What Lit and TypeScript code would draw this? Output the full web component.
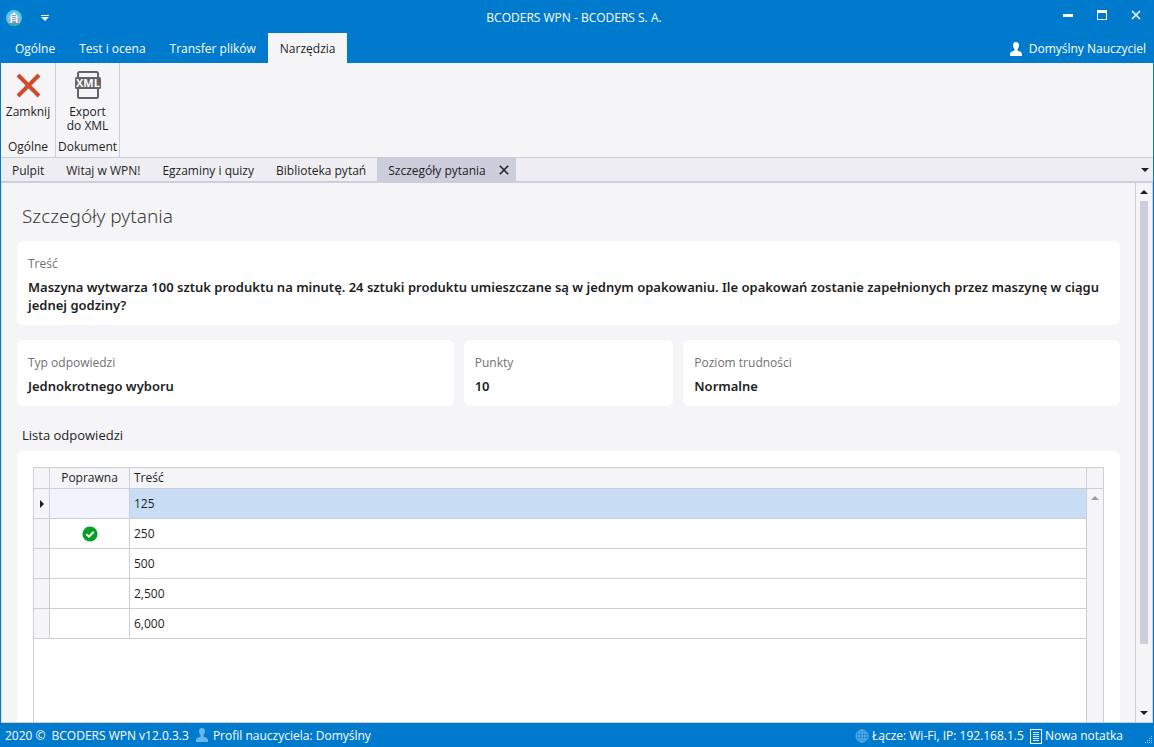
import { LitElement, html, svg, css, nothing } from "lit";
import { customElement, state } from "lit/decorators.js";
import { classMap } from "lit/directives/class-map.js";

interface Answer {
  text: string;
  correct: boolean;
}

const RIBBON_TABS = ["Ogólne", "Test i ocena", "Transfer plików", "Narzędzia"];
const DOCUMENTS = ["Pulpit", "Witaj w WPN!", "Egzaminy i quizy", "Biblioteka pytań", "Szczegóły pytania"];
const ANSWERS: Answer[] = [
  { text: "125", correct: false },
  { text: "250", correct: true },
  { text: "500", correct: false },
  { text: "2,500", correct: false },
  { text: "6,000", correct: false },
];

const person = svg`<path d="M7 0C9.2 0 10.2 1.6 10 3.8C9.9 5.2 9.3 6.3 8.6 7V8.8C10.6 9.4 13 10 13 12V14H1V12C1 10 3.4 9.4 5.4 8.8V7C4.7 6.3 4.1 5.2 4 3.8C3.8 1.6 4.8 0 7 0Z" fill="currentColor"/>`;

const logoIcon = html`<svg width="16" height="16" viewBox="0 0 16 16" aria-hidden="true">
  <circle cx="8" cy="8" r="8" fill="#4dcbea"/>
  <path d="M1.6 12.8H14.4A8 8 0 0 1 1.6 12.8Z" fill="#35ae9c"/>
  <path d="M2.5 6.500H13.5V13H2.5Z" fill="#d8b9c8"/>
  <path d="M4.6 4.8L8 2L11.4 4.8V13H4.6Z" fill="#f3eef6"/>
  <path d="M4.4 5L8 2L11.6 5" fill="none" stroke="#e3a9ba" stroke-width=".8"/>
  <path d="M6 5.500H10M6 7.500H10M6 9.500H10" stroke="#6aa9dd" stroke-width="1"/>
  <path d="M3.5 8V12M12.5 8V12" stroke="#8e9bc8" stroke-width=".8"/>
  <path d="M6 11H10V13H6Z" fill="#7f9fd6"/>
</svg>`;

const closeBigIcon = html`<svg width="32" height="32" viewBox="0 0 32 32" aria-hidden="true">
  <path d="M6 5L27 26M27 5L6 26" stroke="#d24a2e" stroke-width="4"/>
</svg>`;

const xmlIcon = html`<svg width="32" height="32" viewBox="0 0 32 32" aria-hidden="true">
  <path d="M6 8V3.500Q6 2 7.500 2H24.500Q26 2 26 3.500V8" fill="none" stroke="#646464" stroke-width="2"/>
  <path d="M6 19V26.500Q6 28 7.500 28H24.500Q26 28 26 26.500V19" fill="none" stroke="#646464" stroke-width="2"/>
  <rect x="3" y="7" width="26" height="12" rx="1.500" fill="#646464"/>
  <text x="16" y="17" text-anchor="middle" font-family="Open Sans, sans-serif" font-size="11" font-weight="700" fill="#fff">XML</text>
</svg>`;

const checkIcon = html`<svg width="16" height="16" viewBox="0 0 16 16" role="img" aria-label="Poprawna">
  <circle cx="8" cy="8" r="7.600" fill="#049f25"/>
  <path d="M4.300 8.200L7 10.700L11.700 5.700" fill="none" stroke="#fff" stroke-width="2"/>
</svg>`;

const globeIcon = html`<svg width="14" height="14" viewBox="0 0 14 14" aria-hidden="true">
  <g fill="none" stroke="#67b5ea" stroke-width="1">
    <circle cx="7" cy="7" r="6"/>
    <ellipse cx="7" cy="7" rx="3" ry="6"/>
    <path d="M7 1V13M1 7H13M2 4H12M2 10H12"/>
  </g>
</svg>`;

const noteIcon = html`<svg width="12" height="15" viewBox="0 0 12 15" aria-hidden="true">
  <rect x=".5" y=".5" width="11" height="14" fill="none" stroke="#fff"/>
  <path d="M3 3.500H9M3 5.500H9M3 7.500H9M3 9.500H9M3 11.500H9" stroke="#cfe6f7" stroke-width="1"/>
</svg>`;

const gripIcon = html`<svg width="8" height="8" viewBox="0 0 8 8" aria-hidden="true">
  <path d="M6 0H7V1H6ZM4 2H5V3H4ZM6 2H7V3H6ZM2 4H3V5H2ZM4 4H5V5H4ZM6 4H7V5H6ZM0 6H1V7H0ZM2 6H3V7H2ZM4 6H5V7H4ZM6 6H7V7H6Z" fill="#9fd0f2"/>
</svg>`;

const downIcon = html`<svg width="8" height="4" viewBox="0 0 8 4" aria-hidden="true"><path d="M0 0H8L4 4Z" fill="currentColor"/></svg>`;
const upIcon = html`<svg width="8" height="4" viewBox="0 0 8 4" aria-hidden="true"><path d="M0 4H8L4 0Z" fill="currentColor"/></svg>`;

@customElement("app-root")
export class AppRoot extends LitElement {
  @state() private ribbonTab = 3;
  @state() private document = 4;
  @state() private row = 0;

  static styles = css`
    :host {
      --blue: #007acc;
      --line: #cccedb;
      --panel: #f5f5f7;
      display: flex;
      flex-direction: column;
      height: 100vh;
      overflow: hidden;
      background: var(--blue);
      color: #1e1e1e;
      font: 12px/16px "Open Sans", "Noto Sans", sans-serif;
    }
    * { box-sizing: border-box; }
    button {
      margin: 0;
      padding: 0;
      border: 0;
      background: none;
      color: inherit;
      font: inherit;
      display: flex;
      align-items: center;
      white-space: nowrap;
    }
    svg { display: block; flex: none; }
    h1, h2, p, dl, dd { margin: 0; font-weight: 400; }

    .titlebar {
      display: grid;
      grid-template-columns: 1fr auto 1fr;
      align-items: center;
      height: 33px;
      padding: 2px 12px 0 6px;
      color: #fff;
    }
    .quick { display: flex; align-items: center; gap: 19px; }
    .window { display: flex; justify-content: flex-end; align-items: center; gap: 22px; padding-bottom: 6px; }
    .window button { height: 20px; width: 12px; justify-content: center; }

    .ribbon-tabs { display: flex; height: 30px; flex: none; color: #fff; padding-left: 3px; }
    .ribbon-tabs button { padding: 2px 12px 0; }
    .ribbon-tabs .selected { background: var(--panel); color: #1e1e1e; }
    .ribbon-tabs .user { margin-left: auto; padding: 2px 8px 0 0; gap: 6px; }

    .body {
      flex: 1;
      min-height: 0;
      display: flex;
      flex-direction: column;
      margin: 0 1px;
      background: var(--panel);
    }
    .ribbon { display: flex; height: 95px; flex: none; border-bottom: 1px solid var(--line); }
    .group {
      display: flex;
      flex-direction: column;
      align-items: center;
      justify-content: space-between;
      border-right: 1px solid var(--line);
      padding: 7px 2px 2px;
      min-width: 55px;
    }
    .group button { flex-direction: column; line-height: 14px; gap: 3px; padding: 0 2px; }
    .group button span { display: flex; flex-direction: column; align-items: center; }

    .docs {
      display: flex;
      flex: none;
      height: 25px;
      border-bottom: 2px solid var(--line);
      background: #eeeef2;
    }
    .docs button { padding: 2px 11px 0; }
    .docs .selected { display: flex; background: var(--line); padding-right: 6px; }
    .docs .selected button { padding: 2px 12px 0 11px; }
    .docs .selected .close { width: 12px; padding: 0; justify-content: center; }
    .docs .more { margin-left: auto; padding: 0 4px; }

    .scroll { flex: 1; min-height: 0; display: flex; border-bottom: 1px solid var(--line); border-left: 1px solid #e0e1e8; }
    .page {
      flex: 1;
      min-width: 0;
      display: flex;
      flex-direction: column;
      overflow: hidden;
      padding: 18px 15px 0;
    }
    h1 { padding-left: 5px; font: 300 19px/30px "Noto Sans", sans-serif; color: #3c3c3c; margin-bottom: 10px; }
    h2 { padding-left: 5px; font-size: 13px; line-height: 18px; margin: 20px 0 7px; }
    .card { background: #fff; border-radius: 6px; padding: 15px 11px 11px; }
    .card dt { color: #717171; margin-bottom: 6px; }
    .card dd { font: 600 13px/18px "Noto Sans", sans-serif; }
    .cards { display: grid; grid-template-columns: 25fr 12fr 25fr; gap: 10px; margin-top: 15px; }

    .answers { flex: 1; min-height: 0; background: #fff; border-radius: 6px 6px 0 0; padding: 16px 16px 0; display: flex; }
    .grid { flex: 1; display: flex; border: 1px solid var(--line); border-bottom: 0; }
    .rows { flex: 1; }
    table { width: 100%; border-spacing: 0; table-layout: fixed; }
    th, td { padding: 0 4px; height: 30px; border-bottom: 1px solid var(--line); border-right: 1px solid var(--line); text-align: left; font-weight: 400; }
    th:last-child, td:last-child { border-right: 0; }
    thead th { height: 21px; background: var(--panel); }
    .mark { width: 16px; padding: 0; background: var(--panel); }
    .ok { width: 80px; text-align: center; }
    .mark svg, .ok svg { margin: 0 auto; }
    .current .ok { background: #f0f5fd; }
    .current .text { background: #c9def5; }

    .bar { width: 17px; flex: none; display: flex; flex-direction: column; align-items: center; background: var(--panel); border-left: 1px solid var(--line); }
    .bar button { height: 18px; width: 16px; justify-content: center; flex: none; }
    .bar .corner { height: 21px; width: 100%; border-bottom: 1px solid var(--line); }
    .bar.disabled button { color: #a0a0a0; }
    .bar.main { width: 18px; border-right: 1px solid var(--line); }
    .track { flex: 1; width: 8px; }
    .thumb { height: 88%; background: var(--line); }

    .status { display: flex; align-items: center; height: 24px; flex: none; padding: 2px 1px 0 5px; color: #fff; }
    .status .profile { color: #67b5ea; margin: 0 4px 2px 6px; }
    .status .version { margin-left: 6px; }
    .status .right { margin-left: auto; display: flex; align-items: center; }
    .status button, .status .link { display: flex; align-items: center; gap: 3px; }
    .status button { margin: 0 22px 0 6px; }
    .status .grip { align-self: flex-end; }
  `;

  private documentTab(name: string, i: number) {
    if (i !== this.document) {
      return html`<button role="tab" aria-selected="false" @click=${() => (this.document = i)}>${name}</button>`;
    }
    return html`<div class="selected">
      <button role="tab" aria-selected="true">${name}</button>
      <button class="close" aria-label="Zamknij kartę">
        <svg width="10" height="10" viewBox="0 0 10 10"><path d="M.8 .8L9.200 9.200M9.200 .8L.8 9.200" stroke="#1e1e1e" stroke-width="1.500"/></svg>
      </button>
    </div>`;
  }

  private card(label: string, value: string) {
    return html`<dl class="card"><dt>${label}</dt><dd>${value}</dd></dl>`;
  }

  render() {
    return html`
      <header class="titlebar">
        <div class="quick">
          ${logoIcon}
          <button aria-label="Dostosuj pasek">
            <svg width="8" height="6" viewBox="0 0 8 6"><path d="M0 0H8V1H0ZM0 2H8L4 6Z" fill="#fff"/></svg>
          </button>
        </div>
        <span>BCODERS WPN - BCODERS S. A.</span>
        <div class="window">
          <button aria-label="Minimalizuj"><svg width="10" height="10" viewBox="0 0 10 10"><path d="M0 4H10V7H0Z" fill="#fff"/></svg></button>
          <button aria-label="Maksymalizuj"><svg width="10" height="10" viewBox="0 0 10 10"><path d="M0 0H10V10H0ZM1 3V9H9V3Z" fill="#fff" fill-rule="evenodd"/></svg></button>
          <button aria-label="Zamknij okno"><svg width="10" height="10" viewBox="0 0 10 10"><path d="M1 1L9 9M9 1L1 9" stroke="#fff" stroke-width="1.500"/></svg></button>
        </div>
      </header>

      <nav class="ribbon-tabs">
        ${RIBBON_TABS.map(
          (name, i) => html`<button class=${classMap({ selected: i === this.ribbonTab })} @click=${() => (this.ribbonTab = i)}>${name}</button>`
        )}
        <button class="user"><svg width="14" height="14" viewBox="0 0 14 14" aria-hidden="true">${person}</svg>Domyślny Nauczyciel</button>
      </nav>

      <div class="body">
        <div class="ribbon">
          <section class="group">
            <button>${closeBigIcon}<span>Zamknij</span></button>
            <span>Ogólne</span>
          </section>
          <section class="group">
            <button>${xmlIcon}<span>Export<br />do XML</span></button>
            <span>Dokument</span>
          </section>
        </div>

        <div class="docs" role="tablist">
          ${DOCUMENTS.map((name, i) => this.documentTab(name, i))}
          <button class="more" aria-label="Lista kart">${downIcon}</button>
        </div>

        <div class="scroll">
          <main class="page">
            <h1>Szczegóły pytania</h1>
            ${this.card(
              "Treść",
              "Maszyna wytwarza 100 sztuk produktu na minutę. 24 sztuki produktu umieszczane są w jednym opakowaniu. Ile opakowań zostanie zapełnionych przez maszynę w ciągu jednej godziny?"
            )}
            <div class="cards">
              ${this.card("Typ odpowiedzi", "Jednokrotnego wyboru")}
              ${this.card("Punkty", "10")}
              ${this.card("Poziom trudności", "Normalne")}
            </div>
            <h2>Lista odpowiedzi</h2>
            <section class="answers">
              <div class="grid">
                <div class="rows">
                  <table>
                    <thead>
                      <tr><th class="mark"></th><th class="ok">Poprawna</th><th>Treść</th></tr>
                    </thead>
                    <tbody>
                      ${ANSWERS.map(
                        (a, i) => html`<tr class=${classMap({ current: i === this.row })} @click=${() => (this.row = i)}>
                          <td class="mark">
                            ${i === this.row
                              ? html`<svg width="4" height="8" viewBox="0 0 4 8" aria-hidden="true"><path d="M0 0L4 4L0 8Z" fill="#1e1e1e"/></svg>`
                              : nothing}
                          </td>
                          <td class="ok">${a.correct ? checkIcon : nothing}</td>
                          <td class="text">${a.text}</td>
                        </tr>`
                      )}
                    </tbody>
                  </table>
                </div>
                <div class="bar disabled">
                  <div class="corner"></div>
                  <button disabled aria-label="Przewiń listę w górę">${upIcon}</button>
                </div>
              </div>
            </section>
          </main>
          <div class="bar main">
            <button aria-label="Przewiń w górę">${upIcon}</button>
            <div class="track"><div class="thumb"></div></div>
            <button aria-label="Przewiń w dół">${downIcon}</button>
          </div>
        </div>
      </div>

      <footer class="status">
        <span>2020 ©</span>
        <span class="version">BCODERS WPN v12.0.3.3</span>
        <svg class="profile" width="14" height="14" viewBox="0 0 14 14" aria-hidden="true">${person}</svg>
        <span>Profil nauczyciela: Domyślny</span>
        <div class="right">
          <span class="link">${globeIcon}Łącze: Wi-Fi, IP: 192.168.1.5</span>
          <button>${noteIcon}Nowa notatka</button>
          <span class="grip">${gripIcon}</span>
        </div>
      </footer>
    `;
  }
}
